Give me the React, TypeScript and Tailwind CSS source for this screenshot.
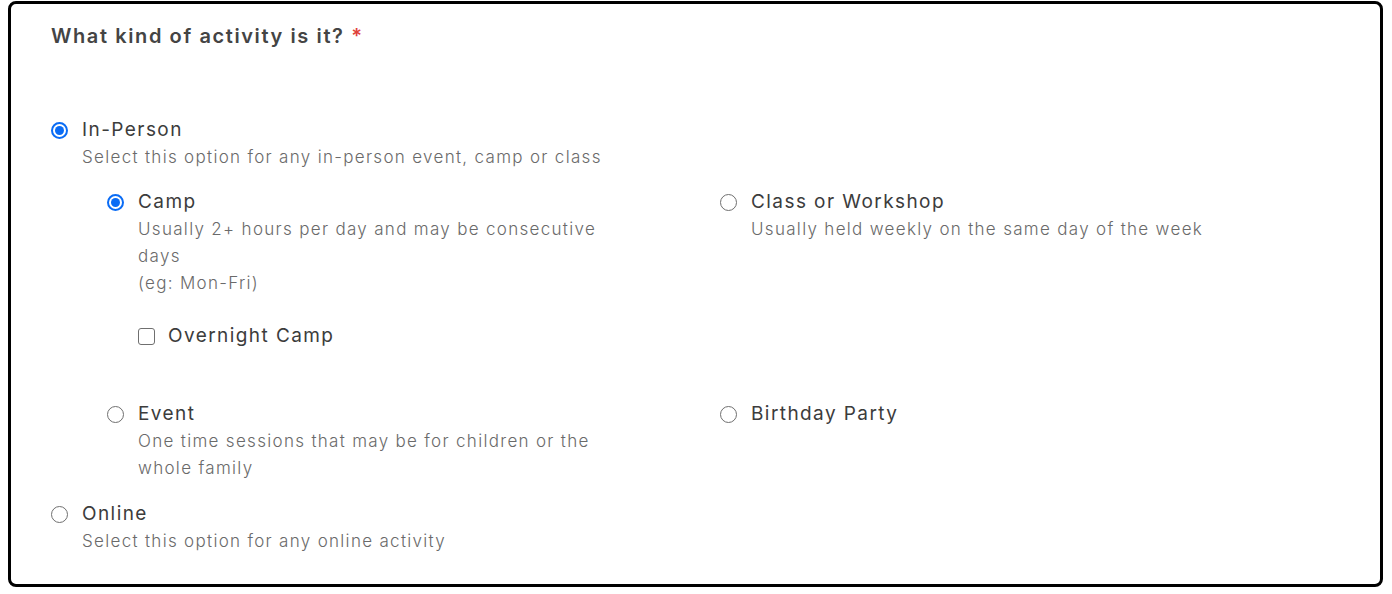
import React from "react";

function Radio({ checked }: { checked?: boolean }) {
  if (checked) {
    return (
      <span className="flex h-[17px] w-[17px] shrink-0 items-center justify-center rounded-full border-2 border-[#0a6cf5] bg-white">
        <span className="h-[9px] w-[9px] rounded-full bg-[#0a6cf5]" />
      </span>
    );
  }
  return <span className="h-[17px] w-[17px] shrink-0 rounded-full border border-[#6f6f6f] bg-white" />;
}

function Option({
  checked,
  label,
  lines,
  children,
}: {
  checked?: boolean;
  label: string;
  lines?: string[];
  children?: React.ReactNode;
}) {
  return (
    <div className="flex flex-col">
      <div className="flex h-[27px] items-center gap-[14px]">
        <Radio checked={checked} />
        <span className="whitespace-nowrap text-[19px] tracking-[0.075em] text-[#3c3c3c]">{label}</span>
      </div>
      {lines && (
        <div className="pl-[31px] text-[17px] font-light leading-[27px] tracking-[0.077em] text-[#6a6a6a]">
          {lines.map((l) => (
            <div key={l} className="whitespace-nowrap">
              {l}
            </div>
          ))}
        </div>
      )}
      {children}
    </div>
  );
}

export default function App() {
  return (
    <div className="bg-white pt-px" style={{ fontFamily: "Inter, 'Open Sans', sans-serif" }}>
      <div className="ml-2 h-[586px] w-[1375px] rounded-lg border-[3px] border-black px-[40px] pt-[18px]">
        <div className="text-[20px] font-semibold leading-[28px] tracking-[0.08em] text-[#444]">
          What kind of activity is it? <span className="text-[#e0413a]">*</span>
        </div>
        <div className="mt-[67px]">
          <Option checked label="In-Person" lines={["Select this option for any in-person event, camp or class"]} />
          <div className="ml-[56px] mt-[18px] grid grid-cols-[613px_1fr] gap-y-[51px]">
            <Option checked label="Camp" lines={["Usually 2+ hours per day and may be consecutive", "days", "(eg: Mon-Fri)"]}>
              <div className="ml-[31px] mt-[26px] flex h-[27px] items-center gap-[13px]">
                <span className="h-[17px] w-[17px] rounded-[3px] border-[1.5px] border-[#6f6f6f] bg-white" />
                <span className="whitespace-nowrap text-[19px] tracking-[0.075em] text-[#3c3c3c]">Overnight Camp</span>
              </div>
            </Option>
            <Option label="Class or Workshop" lines={["Usually held weekly on the same day of the week"]} />
            <Option label="Event" lines={["One time sessions that may be for children or the", "whole family"]} />
            <Option label="Birthday Party" />
          </div>
          <div className="mt-[19px]">
            <Option label="Online" lines={["Select this option for any online activity"]} />
          </div>
        </div>
      </div>
    </div>
  );
}
